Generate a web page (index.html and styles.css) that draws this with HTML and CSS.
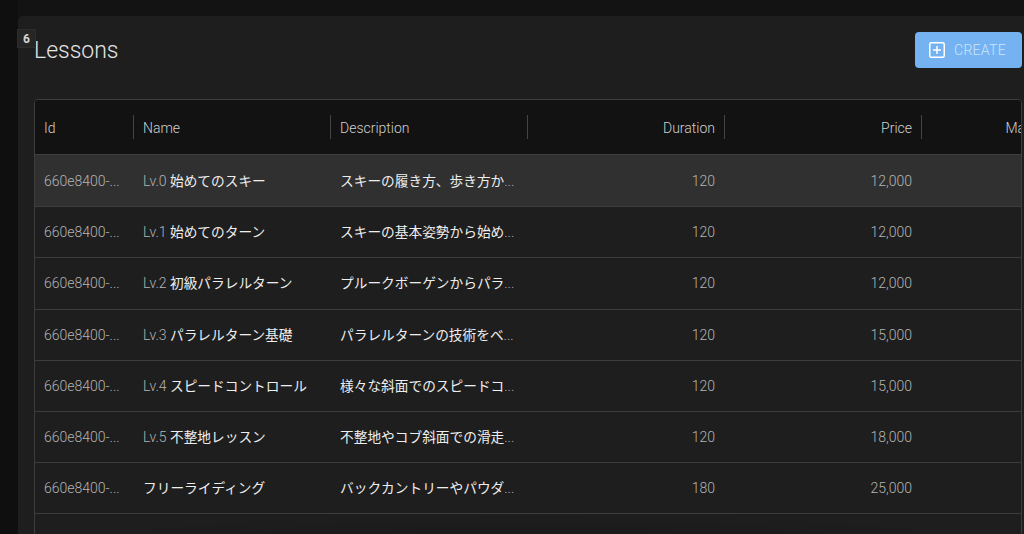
FILE: index.html
```html
<!DOCTYPE html>
<html lang="en">

<head>
    <meta charset="UTF-8">
    <meta name="viewport" content="width=device-width, initial-scale=1.0">
    <title>Lessons</title>
    <link rel="stylesheet" href="styles.css">
</head>

<body>
    <div class="page">
        <div class="panel">
            <span class="badge">6</span>
            <div class="toolbar">
                <h1 class="title">Lessons</h1>
                <button class="createbtn">
                    <svg class="createicon" viewBox="0 0 16 16" width="16" height="16" aria-hidden="true">
                        <rect x="0.75" y="0.75" width="14.5" height="14.5" rx="1.5" fill="none" stroke="#fff" stroke-width="1.5" />
                        <path d="M8 4v8M4 8h8" fill="none" stroke="#fff" stroke-width="1.5" />
                    </svg>
                    CREATE
                </button>
            </div>
            <div class="tablewrap">
                <div class="row headrow">
                    <div class="cell">Id<i class="sep"></i></div>
                    <div class="cell">Name<i class="sep"></i></div>
                    <div class="cell">Description<i class="sep"></i></div>
                    <div class="cell num">Duration<i class="sep"></i></div>
                    <div class="cell num">Price<i class="sep"></i></div>
                    <div class="cell num">Max Participants</div>
                </div>
                <div class="row hover">
                    <div class="cell dim">660e8400-...</div>
                    <div class="cell name"><span class="lv">Lv.0</span> 始めてのスキー</div>
                    <div class="cell name">スキーの履き方、歩き方か<span class="dots">...</span></div>
                    <div class="cell num dim">120</div>
                    <div class="cell num dim">12,000</div>
                    <div class="cell"></div>
                </div>
                <div class="row">
                    <div class="cell dim">660e8400-...</div>
                    <div class="cell name"><span class="lv">Lv.1</span> 始めてのターン</div>
                    <div class="cell name">スキーの基本姿勢から始め<span class="dots">...</span></div>
                    <div class="cell num dim">120</div>
                    <div class="cell num dim">12,000</div>
                    <div class="cell"></div>
                </div>
                <div class="row">
                    <div class="cell dim">660e8400-...</div>
                    <div class="cell name"><span class="lv">Lv.2</span> 初級パラレルターン</div>
                    <div class="cell name">プルークボーゲンからパラ<span class="dots">...</span></div>
                    <div class="cell num dim">120</div>
                    <div class="cell num dim">12,000</div>
                    <div class="cell"></div>
                </div>
                <div class="row">
                    <div class="cell dim">660e8400-...</div>
                    <div class="cell name"><span class="lv">Lv.3</span> パラレルターン基礎</div>
                    <div class="cell name">パラレルターンの技術をベ<span class="dots">...</span></div>
                    <div class="cell num dim">120</div>
                    <div class="cell num dim">15,000</div>
                    <div class="cell"></div>
                </div>
                <div class="row">
                    <div class="cell dim">660e8400-...</div>
                    <div class="cell name"><span class="lv">Lv.4</span> スピードコントロール</div>
                    <div class="cell name">様々な斜面でのスピードコ<span class="dots">...</span></div>
                    <div class="cell num dim">120</div>
                    <div class="cell num dim">15,000</div>
                    <div class="cell"></div>
                </div>
                <div class="row">
                    <div class="cell dim">660e8400-...</div>
                    <div class="cell name"><span class="lv">Lv.5</span> 不整地レッスン</div>
                    <div class="cell name">不整地やコブ斜面での滑走<span class="dots">...</span></div>
                    <div class="cell num dim">120</div>
                    <div class="cell num dim">18,000</div>
                    <div class="cell"></div>
                </div>
                <div class="row">
                    <div class="cell dim">660e8400-...</div>
                    <div class="cell name">フリーライディング</div>
                    <div class="cell name">バックカントリーやパウダ<span class="dots">...</span></div>
                    <div class="cell num dim">180</div>
                    <div class="cell num dim">25,000</div>
                    <div class="cell"></div>
                </div>
                <div class="row"></div>
            </div>
            <div class="bottomshade"></div>
        </div>
    </div>
</body>

</html>
```

FILE: styles.css
```css
* {
    font-family: Roboto, "Noto Sans CJK JP", sans-serif;
    margin: 0;
    padding: 0;
    box-sizing: border-box;
}

html,
body {
    height: 100%;
    overflow: hidden;
    background-color: #131313;
}

.page {
    height: 100vh;
    padding: 16px 0 0 18px;
    overflow: hidden;
    background: linear-gradient(to right, #0f0f0f 18px, #131313 18px);
}

/* the opacity keeps the text antialiasing grey instead of coloured */
.panel {
    position: relative;
    height: 100%;
    padding: 16px 2px 0 16px;
    background-color: #1e1e1e;
    border-radius: 5px 0 0 0;
    opacity: 0.999;
}

.badge {
    position: absolute;
    left: -1px;
    top: 13px;
    width: 19px;
    height: 19px;
    display: flex;
    justify-content: center;
    align-items: center;
    background-color: #262626;
    border: 1px solid #2c2c2c;
    color: #d4d4d4;
    font-size: 12px;
    font-weight: 700;
}

.toolbar {
    display: flex;
    justify-content: space-between;
    align-items: flex-start;
    height: 67px;
}

.title {
    font-size: 23px;
    font-weight: 300;
    line-height: 38px;
    color: #e4e4e4;
}

.createbtn {
    width: 107px;
    height: 36px;
    display: flex;
    align-items: center;
    gap: 9px;
    padding-left: 14px;
    border: none;
    border-radius: 4px;
    background-color: #74b2f2;
    color: #cfe4fa;
    font-size: 14px;
    font-weight: 300;
    letter-spacing: 0.3px;
}

.tablewrap {
    height: 500px;
    overflow: hidden;
    border: 1px solid #3d3d3d;
    border-radius: 4px;
}

.row {
    display: grid;
    grid-template-columns: 98px repeat(5, 197px);
    width: 1083px;
    height: 51.2px;
    border-bottom: 1px solid #3d3d3d;
    align-items: center;
}

.headrow {
    height: 55px;
    background-color: #121212;
    font-weight: 300;
}

.headrow .cell {
    padding-top: 1px;
}

.hover {
    height: 52.2px;
    background-color: #303030;
}

.cell {
    position: relative;
    padding: 0 10px;
    font-size: 14px;
    font-weight: 300;
    white-space: nowrap;
    height: 24px;
    line-height: 24px;
    color: #d0d0d0;
}

.cell:first-child {
    padding-left: 9px;
}

.num {
    text-align: right;
    left: 1px;
}

.dim,
.lv,
.dots {
    color: #b4b4b4;
    font-size: 14px;
    font-weight: 300;
}

.name {
    color: #eeeeee;
    font-size: 13.7px;
    font-weight: 400;
}

.sep {
    position: absolute;
    right: -1px;
    top: 0;
    width: 1px;
    height: 24px;
    background-color: #444;
}

.num .sep {
    right: 0;
}

/* faint dark patch along the bottom edge */
.bottomshade {
    position: absolute;
    left: 60px;
    right: 40px;
    bottom: 0;
    height: 20px;
    background: radial-gradient(ellipse 50% 100% at 50% 100%, rgba(0, 0, 0, 0.14), rgba(0, 0, 0, 0));
}
```
